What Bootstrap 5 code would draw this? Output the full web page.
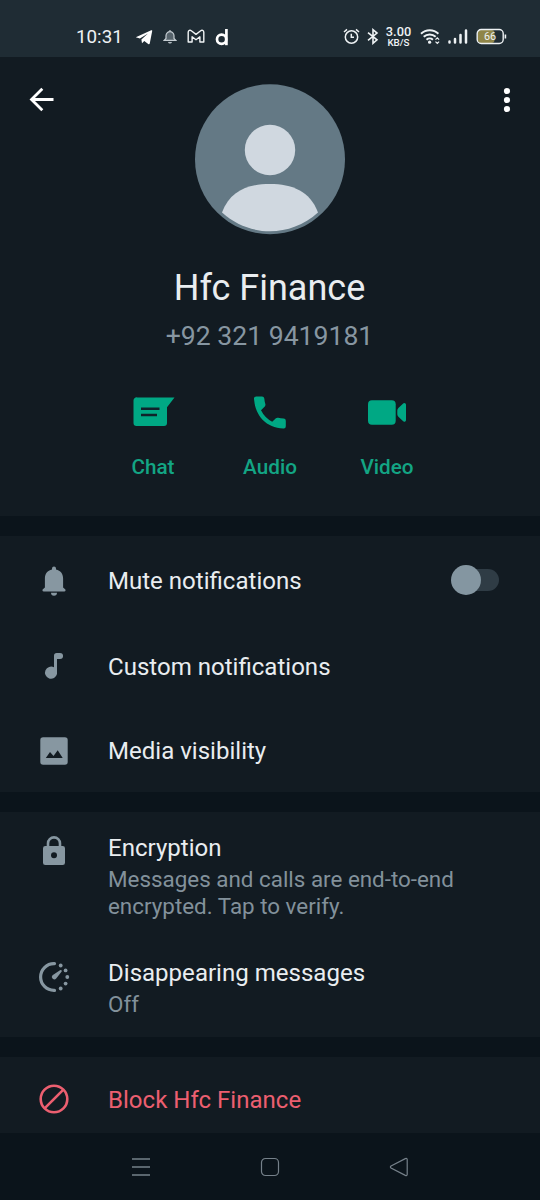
<!DOCTYPE html>
<html lang="en">
<head>
<meta charset="utf-8">
<meta name="viewport" content="width=device-width, initial-scale=1">
<title>Contact info</title>
<link href="https://cdn.jsdelivr.net/npm/bootstrap@5.3.0/dist/css/bootstrap.min.css" rel="stylesheet">
<script src="https://cdn.jsdelivr.net/npm/bootstrap@5.3.0/dist/js/bootstrap.bundle.min.js" defer></script>
<style>
body{background:#0b141b;color:#e9edf0;font-family:Roboto,"Liberation Sans",sans-serif;width:540px;height:1200px;overflow:hidden}
svg{display:block;flex:none}
.panel{background:#121b22}
.statusbar{height:57px;background:#1f2c34;padding:16px 33px 0 76px;color:#eef2f4}
.clock{font-size:18.8px;line-height:24px;width:46px;white-space:nowrap;margin-top:8.5px}
.speed{width:27px;text-align:center;font-weight:500;font-size:12.8px;line-height:10.5px}
.speed small{font-size:9.8px}
.profile{height:459px}
.topline{padding:27px 27px 0 27px;height:177px}
.avatar{margin-left:-18px}
.contact-name{font-size:36px;line-height:44px;margin-top:32px;font-weight:400;padding-right:1px}
.phone{font-size:26.6px;line-height:32px;margin-top:9.5px;color:#8796a1;padding-right:1px}
.actions{margin-top:40.5px;color:#00a884}
.action{width:117px}
.action svg{position:relative;top:.5px}
.action span{font-size:20.7px;line-height:26px;font-weight:500;margin-top:21.5px;color:#13a584}
.divider{height:20px}
.icon-col{width:108px;flex:none;color:#8797a1}
.setting-title{font-size:24.05px;line-height:30px;white-space:nowrap}
.setting-sub{font-size:22.4px;line-height:26.5px;margin-top:3px;color:#82919b;white-space:nowrap}
.danger-row,.danger-row .icon-col{color:#ec5f70}
.h-mute{height:89px}.h-custom{height:84px}.h-media{height:83px}
.h-mute .setting-title{padding-top:1px}
.h-enc{height:125px;padding-top:21px}.h-dis{height:100px;padding-top:21px}.h-block{height:76px;padding-top:9px}
.h-block .icon-col{padding-bottom:2px}
.track{width:44px;height:22px;border-radius:11px;background:#2f3c45;margin:0 41px 1px 0}
.knob{width:30px;height:30px;border-radius:50%;background:#8496a1;margin:-4px 0 0 -4px}
.navkeys{height:67px;padding:0 0 0 76.5px;color:#76818a}
.navkeys>div{width:129px}
</style>
</head>
<body>
<header class="statusbar d-flex justify-content-between">
  <div class="d-flex align-items-start">
    <span class="clock">10:31</span>
    <svg style="margin:13px 0 0 12.5px" width="18" height="17" viewBox="0 0 18 17"><path d="M.8 8.2 16.200 1.300Q17.500.8 17.200 2.100L14.800 14.300Q14.500 15.800 13.200 15L9.300 12.100 7 14.300 6.400 10.500 13 4.500 4.900 9.500Z" fill="#fff"/></svg>
    <svg style="margin:13px 0 0 10px" width="14" height="16" viewBox="0 0 14 16" fill="#56636b" stroke="#c6ced3" stroke-width="1.2"><path d="M1.200 11.400h11.600L11 9.500V6.700a4 4 0 0 0-8 0v2.800ZM7 2.700V1M5.600 13a1.500 1.500 0 0 0 2.800 0"/></svg>
    <svg style="margin:13px 0 0 10px" width="18" height="15" viewBox="0 0 18 15" fill="none" stroke="#f1f4f5" stroke-width="1.4" stroke-linejoin="round"><path d="M1.200 3.300V13h3.900V7.800L9 10.700l3.900-2.900V13h3.900V3.300c0-2-1.900-2.400-3.100-1.500L9 5.400 4.300 1.800C3.100.9 1.200 1.300 1.200 3.300Z"/></svg>
    <svg style="margin:12px 0 0 10px" width="14" height="18" viewBox="0 0 14 18" fill="none" stroke="#fff" stroke-width="2.7"><circle cx="6.600" cy="11.300" r="4.600"/><path d="M11.400 1v16.200"/></svg>
  </div>
  <div class="d-flex align-items-start">
    <svg style="margin-top:12px" width="17" height="17" viewBox="0 0 17 17" fill="none" stroke="#eef2f4" stroke-width="1.5"><circle cx="8.500" cy="9" r="6.200"/><path d="M8.300 5.800v3.500H11M1 4l3-2.600M16 4l-3-2.600"/></svg>
    <svg style="margin:12px 0 0 7px" width="12" height="17" viewBox="0 0 12 17" fill="none" stroke="#eef2f4" stroke-width="1.600"><path d="m1 4.600 9 7.200-4 3.500V1.700l4 3.400-9 7.200"/></svg>
    <div class="speed" style="margin:10.500px 0 0 6px">3.00<br><small>KB/S</small></div>
    <svg style="margin:12px 0 0 8px" width="21" height="17" viewBox="0 0 21 17" fill="none" stroke="#eef2f4" stroke-width="2"><path d="M1 5.700a12.500 12.500 0 0 1 17.400 0M3.700 8.800a8.800 8.800 0 0 1 12 0M6.500 11.700a4.800 4.800 0 0 1 6.400 0"/><circle cx="9.600" cy="14.200" r="1.600" fill="#eef2f4" stroke="none"/><path d="m15.500 11.700 1.800-1.800 1.800 1.800M15.500 13.600l1.800 1.800 1.800-1.800" stroke-width="1.200"/></svg>
    <svg style="margin:12px 0 0 7px" width="20" height="17" viewBox="0 0 20 17" stroke="#eef2f4" stroke-width="2.5" stroke-linecap="round"><path d="M1.500 14.500v-1M7 14.500V11M12.500 14.500V7M18 14.500v-12"/></svg>
    <svg style="margin:12px 0 0 8px" width="31" height="17" viewBox="0 0 31 17"><rect x="2" y="2" width="16.500" height="13" rx="3" fill="#8f8548"/><rect x="1.200" y="1.500" width="26" height="14" rx="4" fill="none" stroke="#eef2f4" stroke-width="1.400"/><path d="M29.400 6.500v4" stroke="#eef2f4" stroke-width="1.600"/><text x="14" y="12.400" text-anchor="middle" font-size="10.800" fill="#eef2f4">66</text></svg>
  </div>
</header>

<main>
<section class="panel profile">
  <div class="topline d-flex justify-content-between">
    <svg width="30" height="30" viewBox="0 0 30 30" fill="none" stroke="#fff" stroke-width="2.8"><path d="M26.500 15.500H5M15.300 4.700 4.500 15.500l10.800 10.800"/></svg>
    <svg class="avatar" width="150" height="151" viewBox="0 0 150 151"><circle cx="75" cy="75.300" r="75" fill="#647985"/><circle cx="75" cy="66" r="25.200" fill="#d0d8e0"/><path d="M27 128.500C35 107 53 100 75 100s40 7 48 28.500C109 141 92 147.300 75 147.300S41 141 27 128.500Z" fill="#d0d8e0"/></svg>
    <svg width="12" height="30" viewBox="0 0 12 30" fill="#fff"><circle cx="6" cy="7" r="3.1"/><circle cx="6" cy="16" r="3.1"/><circle cx="6" cy="25" r="3.1"/></svg>
  </div>
  <h1 class="contact-name text-center mb-0">Hfc Finance</h1>
  <p class="phone text-center mb-0">+92 321 9419181</p>
  <div class="actions d-flex justify-content-center">
    <div class="action d-flex flex-column align-items-center">
      <svg width="44" height="40" viewBox="0 0 44 40"><path d="M6.500 4.500h37L36 14.300V30a3 3 0 0 1-3 3H5.500a3 3 0 0 1-3-3V7.500a3 3 0 0 1 4-3Z" fill="currentColor"/><path d="M10 15.800h18.500M10 22h16" stroke="#10222a" stroke-width="2.600"/></svg>
      <span>Chat</span>
    </div>
    <div class="action d-flex flex-column align-items-center">
      <svg width="40" height="40" viewBox="0 0 40 40"><path d="M6.200 3.500H12a2.300 2.300 0 0 1 2.300 2c.2 2 .5 3.900 1.100 5.700.2.800 0 1.600-.6 2.200L11 17.200a26 26 0 0 0 11.200 11.500l3.700-3.400c.6-.6 1.400-.8 2.200-.6 1.800.4 3.600.8 5.500.9a2.200 2.200 0 0 1 2.200 2.200v5.500a2.200 2.200 0 0 1-2.400 2.200C16.500 34.800 5.300 23 4 5.900a2.200 2.200 0 0 1 2.200-2.400Z" fill="currentColor"/></svg>
      <span>Audio</span>
    </div>
    <div class="action d-flex flex-column align-items-center">
      <svg width="40" height="40" viewBox="0 0 40 40" fill="currentColor"><rect x="1" y="7.200" width="27.700" height="24.600" rx="4"/><path d="M30.300 17.500c0-1 .4-1.800 1.100-2.500l4.500-4.300c1.300-1.200 3.100-.4 3.100 1.200v15c0 1.600-1.800 2.400-3.100 1.200l-4.500-4.300a3.400 3.400 0 0 1-1.100-2.500Z"/></svg>
      <span>Video</span>
    </div>
  </div>
</section>
<div class="divider"></div>
<section class="panel">
  <div class="d-flex align-items-center h-mute">
    <div class="icon-col d-flex justify-content-center"><svg width="30" height="32" viewBox="0 0 30 32" fill="currentColor"><path d="M15 1.500a2 2 0 0 1 2 2v1c4.500 1 7.100 4 7.100 9v9l2.300 2q.7 2-1 2H4.600q-1.700 0-1-2l2.300-2v-9c0-5 2.600-8 7.100-9v-1a2 2 0 0 1 2-2ZM12 27.700h6a3 3 0 0 1-6 0Z"/></svg></div>
    <div class="setting-title flex-grow-1">Mute notifications</div>
    <div class="track" role="switch" aria-checked="false"><div class="knob float-start"></div></div>
  </div>
  <div class="d-flex align-items-center h-custom">
    <div class="icon-col d-flex justify-content-center"><svg width="30" height="32" viewBox="0 0 30 32" fill="currentColor"><path d="M15 16.300V4.700q0-2.700 2.700-2.700H21a3 3 0 0 1 0 6.100h-3v15a6.100 6.100 0 1 1-3-6.800Z"/></svg></div>
    <div class="setting-title">Custom notifications</div>
  </div>
  <div class="d-flex align-items-center h-media">
    <div class="icon-col d-flex justify-content-center"><svg width="30" height="30" viewBox="0 0 30 30"><rect x="1.300" y="1.300" width="27.400" height="27.400" rx="2.800" fill="currentColor"/><path d="m6.800 22 4.200-6 3.500 4 4.200-5.700 5 7.700Z" fill="#121b22"/></svg></div>
    <div class="setting-title">Media visibility</div>
  </div>
</section>
<div class="divider"></div>
<section class="panel">
  <div class="d-flex align-items-start h-enc">
    <div class="icon-col d-flex justify-content-center"><svg style="margin-top:2px" width="30" height="32" viewBox="0 0 30 32"><path d="M9 13V8.400a6 6 0 0 1 12 0V13" fill="none" stroke="currentColor" stroke-width="2.600"/><rect x="4" y="11" width="22" height="19" rx="2.300" fill="currentColor"/><circle cx="15" cy="20.300" r="3" fill="#121b22"/></svg></div>
    <div><div class="setting-title">Encryption</div><div class="setting-sub">Messages and calls are end-to-end<br>encrypted. Tap to verify.</div></div>
  </div>
  <div class="d-flex align-items-start h-dis">
    <div class="icon-col d-flex justify-content-center"><svg style="margin-top:3px" width="34" height="34" viewBox="0 0 34 34"><path d="M17.500 2.600H17a13.400 13.400 0 0 0 0 26.800h.5" fill="none" stroke="currentColor" stroke-width="3.200" stroke-linecap="round"/><g fill="currentColor"><circle cx="23.700" cy="4.500" r="1.900"/><circle cx="28.600" cy="9.400" r="1.900"/><circle cx="30.300" cy="16" r="1.900"/><circle cx="28.600" cy="22.600" r="1.900"/><circle cx="23.700" cy="27.500" r="1.900"/><path d="m24.700 10.500-5.500 7a2.300 2.300 0 0 1-3.700-3.300l7.500-5q2-.6 1.700 1.300Z"/></g></svg></div>
    <div><div class="setting-title">Disappearing messages</div><div class="setting-sub">Off</div></div>
  </div>
</section>
<div class="divider"></div>
<section class="panel danger-row">
  <div class="d-flex align-items-center h-block">
    <div class="icon-col d-flex justify-content-center"><svg width="32" height="32" viewBox="0 0 32 32" fill="none" stroke="currentColor" stroke-width="2.600"><circle cx="16" cy="16" r="13.300"/><path d="M6.600 25.400 25.400 6.600"/></svg></div>
    <div class="setting-title">Block Hfc Finance</div>
  </div>
</section>
</main>
<nav class="navkeys d-flex align-items-center">
  <div class="d-flex justify-content-center"><svg width="20" height="20" viewBox="0 0 20 20" stroke="currentColor" stroke-width="1.400"><path d="M1 2h18M1 10h18M1 18h18"/></svg></div>
  <div class="d-flex justify-content-center"><svg width="20" height="20" viewBox="0 0 20 20" fill="none" stroke="currentColor" stroke-width="1.200"><rect x="1.500" y="1.500" width="17" height="17" rx="4"/></svg></div>
  <div class="d-flex justify-content-center"><svg width="20" height="20" viewBox="0 0 20 20" fill="none" stroke="currentColor" stroke-width="1.200"><path d="M2 9 16.300 1.600q1.700-.6 1.900 1v14.800q-.2 1.600-1.900 1L2 11q-1.200-1 0-2Z"/></svg></div>
</nav>
</body>
</html>
